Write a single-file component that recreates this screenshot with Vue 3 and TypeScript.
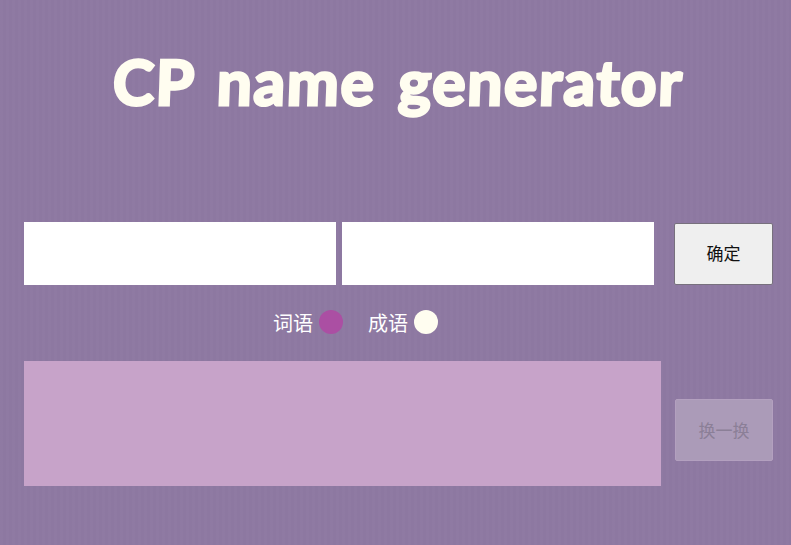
<script setup lang="ts">
import { ref } from 'vue';

const left = ref('');
const right = ref('');
const mode = ref<'word' | 'idiom'>('word');
const result = ref('');
</script>

<template>
  <main class="page">
    <h1 class="title"><span class="title-text">CP name generator</span></h1>

    <div class="input-row">
      <input v-model="left" class="name-input" type="text" />
      <input v-model="right" class="name-input" type="text" />
      <button class="btn confirm" type="button">确定</button>
    </div>

    <div class="mode-row">
      <label class="mode" @click="mode = 'word'">
        <span>词语</span>
        <span class="dot" :class="{ on: mode === 'word' }"></span>
      </label>
      <label class="mode" @click="mode = 'idiom'">
        <span>成语</span>
        <span class="dot" :class="{ on: mode === 'idiom' }"></span>
      </label>
    </div>

    <div class="result-row">
      <div class="result">{{ result }}</div>
      <button class="btn swap" type="button" disabled>换一换</button>
    </div>
  </main>
</template>

<style>
html,
body {
  margin: 0;
  background: #8e79a2;
}
</style>

<style scoped>
.page {
  box-sizing: border-box;
  width: 791px;
  height: 545px;
  padding: 0 18px 0 24px;
  overflow: hidden;
  background-color: #8e79a2;
  background-image: repeating-linear-gradient(90deg, rgba(255, 255, 255, 0.008) 0 3px, rgba(0, 0, 0, 0.008) 3px 6px);
  font-family: "Noto Sans CJK SC", sans-serif;
}

.title {
  margin: 0;
  padding-top: 41px;
  height: 222px;
  box-sizing: border-box;
  text-align: center;
  font-family: "Comic Sans MS", "Lato", sans-serif;
  font-size: 62px;
  line-height: 80px;
  font-weight: 700;
  color: #fffdf0;
  -webkit-text-stroke: 3px #fffdf0;
  letter-spacing: 1.8px;
  word-spacing: 6px;
}

.title-text {
  display: inline-block;
  transform: skewX(-2deg);
}

.input-row {
  display: flex;
  align-items: center;
  height: 63px;
}

.name-input {
  box-sizing: border-box;
  width: 312px;
  height: 63px;
  margin-right: 6px;
  border: 0;
  padding: 0 10px;
  background: #fff;
  outline: none;
}

.btn {
  box-sizing: border-box;
  flex: none;
  width: 99px;
  height: 62px;
  border-radius: 2px;
  padding: 0 0 2px;
  font-family: "Noto Sans CJK SC", sans-serif;
}

.confirm {
  margin-left: 14px;
  border: 1px solid #77707d;
  background: #efefef;
  color: #111;
  font-size: 17px;
}

.mode-row {
  display: flex;
  gap: 25px;
  height: 76px;
  padding: 25px 0 0 249px;
  box-sizing: border-box;
}

.mode {
  display: flex;
  align-items: flex-start;
  gap: 6px;
  height: 26px;
  font-size: 20px;
  line-height: 26px;
  color: #fff;
}

.dot {
  width: 24px;
  height: 24px;
  border-radius: 50%;
  background: #fffdf0;
}

.dot.on {
  background: #ab4fa3;
}

.result-row {
  display: flex;
  align-items: flex-start;
  height: 125px;
}

.result {
  flex: none;
  width: 637px;
  height: 125px;
  background: #c7a3c9;
}

.swap {
  width: 98px;
  margin: 38px 0 0 14px;
  border: 1px solid #b3a0bf;
  background: #ab9bb8;
  color: #8b7f97;
  font-size: 17px;
}
</style>
